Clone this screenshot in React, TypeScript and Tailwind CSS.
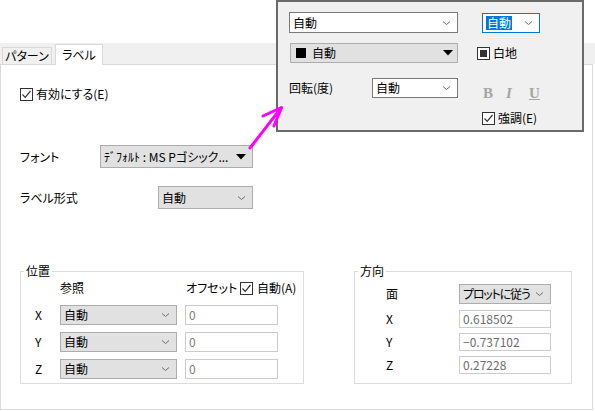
import type { ReactNode } from "react";

// small windows-style dropdown chevron
function Chevron() {
  return (
    <svg width="9" height="6" viewBox="0 0 9 6" className="shrink-0">
      <path d="M1 1.5 L4.5 4.5 L8 1.5" stroke="#6d6d6d" strokeWidth="1" fill="none" />
    </svg>
  );
}

function Triangle() {
  return (
    <svg width="10" height="6" viewBox="0 0 10 6" className="shrink-0">
      <polygon points="0,0 10,0 5,5.5" fill="#000" />
    </svg>
  );
}

function Check({ checked = true }: { checked?: boolean }) {
  return (
    <span className="flex h-[13px] w-[13px] shrink-0 items-center justify-center border border-[#333] bg-white">
      {checked ? (
        <svg width="11" height="11" viewBox="0 0 11 11">
          <path d="M1.5 5.5 L4.2 8.3 L9.5 2" stroke="#333" strokeWidth="1.2" fill="none" />
        </svg>
      ) : null}
    </span>
  );
}

function Select({
  className,
  children,
  arrow = "chevron",
}: {
  className: string;
  children: ReactNode;
  arrow?: "chevron" | "triangle";
}) {
  return (
    <div className={`flex items-center justify-between pl-[3px] pr-[6px] ${className}`}>
      <span className="whitespace-nowrap">{children}</span>
      {arrow === "chevron" ? <Chevron /> : <Triangle />}
    </div>
  );
}

function Field({ value, className }: { value: string; className: string }) {
  return (
    <div className={`flex items-center border border-[#cccccc] bg-white pl-[3px] text-[#6d6d6d] ${className}`}>
      {value}
    </div>
  );
}

function GroupBox({
  title,
  className,
  children,
}: {
  title: string;
  className: string;
  children: ReactNode;
}) {
  return (
    <div className={`relative border border-[#dcdcdc] ${className}`}>
      <span className="absolute -top-[10px] left-[3px] bg-white px-[2px] leading-[18px]">{title}</span>
      {children}
    </div>
  );
}

const grayBox = "bg-[#e1e1e1] border border-[#adadad]";

export default function App() {
  const rows = ["X", "Y", "Z"];
  const dir = [
    ["X", "0.618502"],
    ["Y", "\u22120.737102"],
    ["Z", "0.27228"],
  ];

  return (
    <div className="relative h-[411px] w-[595px] overflow-hidden bg-white text-[12px] leading-[16px] text-black font-['Noto_Sans_CJK_JP','Noto_Sans_CJK_SC',sans-serif] [font-feature-settings:'palt']">
      <div className="h-[43px]" />

      {/* tab strip */}
      <div className="flex h-[21px] items-end bg-[#f0f0f0]">
        <div className="ml-[2px] flex h-[17px] w-[50px] items-center justify-center border border-b-0 border-[#d9d9d9] bg-[#f0f0f0]">
          パターン
        </div>
        <div className="relative top-px z-10 ml-[3px] flex h-[21px] w-[48px] items-center justify-center border border-b-0 border-[#d9d9d9] bg-white">
          ラベル
        </div>
      </div>

      {/* page body */}
      <div className="h-[346px] w-[593px] border border-[#d9d9d9] pl-[19px]">
        <div className="mt-[21px] flex items-center gap-[3px]">
          <Check />
          <span>有効にする(E)</span>
        </div>

        <div className="mt-[43px] flex items-center">
          <span className="w-[80px]">フォント</span>
          <Select arrow="triangle" className={`h-[23px] w-[153px] ${grayBox}`}>
            ﾃﾞﾌｫﾙﾄ : MS Pゴシック...
          </Select>
        </div>

        <div className="mt-[18px] flex items-center">
          <span className="w-[138px]">ラベル形式</span>
          <Select className={`h-[23px] w-[95px] ${grayBox}`}>自動</Select>
        </div>

        <div className="mt-[62px] flex">
          <GroupBox title="位置" className="h-[113px] w-[284px] pl-[14px] pt-[8px]">
            <div className="flex h-[16px] items-center">
              <span className="w-[25px]" />
              <span className="w-[126px]">参照</span>
              <span className="w-[54px]">オフセット</span>
              <Check />
              <span className="ml-[4px]">自動(A)</span>
            </div>
            <div className="mt-[9px] flex flex-col gap-[7px]">
              {rows.map((r) => (
                <div key={r} className="flex h-[20px] items-center">
                  <span className="w-[25px]">{r}</span>
                  <Select className={`h-[20px] w-[117px] ${grayBox}`}>自動</Select>
                  <Field value="0" className="ml-[8px] h-[20px] w-[93px] text-[#808080]" />
                </div>
              ))}
            </div>
          </GroupBox>

          <GroupBox title="方向" className="ml-[50px] h-[113px] w-[218px] pl-[31px] pt-[12px]">
            <div className="flex h-[20px] items-center">
              <span className="w-[73px]">面</span>
              <Select className={`h-[20px] w-[92px] pr-[4px] tracking-[-1.2px] ${grayBox}`}>プロットに従う</Select>
            </div>
            <div className="mt-[6px] flex flex-col gap-[5px]">
              {dir.map(([k, v]) => (
                <div key={k} className="flex h-[18px] items-center">
                  <span className="w-[73px]">{k}</span>
                  <Field value={v} className="h-[18px] w-[92px]" />
                </div>
              ))}
            </div>
          </GroupBox>
        </div>
      </div>

      {/* floating label-format popup */}
      <div className="absolute left-[276px] top-0 h-[132px] w-[308px] border-2 border-[#6a6a6a] bg-[#f0f0f0] pl-[11px] pt-[10px]">
        <div className="flex items-center">
          <Select className="h-[21px] w-[169px] border border-[#7a7a7a] bg-white">自動</Select>
          <div className="ml-[24px] flex h-[20px] w-[58px] items-center justify-between border border-[#0078d7] bg-white pl-[3px] pr-[6px]">
            <span className="bg-[#0078d7] px-[1px] leading-[14px] text-white">自動</span>
            <Chevron />
          </div>
        </div>

        <div className="mt-[10px] flex items-center">
          <div className={`ml-[1px] flex h-[20px] w-[168px] items-center justify-between pl-[5px] pr-[4px] ${grayBox}`}>
            <span className="flex items-center">
              <span className="h-[10px] w-[10px] bg-black" />
              <span className="ml-[6px]">自動</span>
            </span>
            <Triangle />
          </div>
          <span className="ml-[19px] flex h-[13px] w-[13px] items-center justify-center border border-[#333] bg-white">
            <span className="h-[7px] w-[7px] bg-[#333]" />
          </span>
          <span className="ml-[3px]">白地</span>
        </div>

        <div className="mt-[15px] flex items-start">
          <div className="flex h-[20px] w-[169px] items-center justify-between">
            <span>回転(度)</span>
            <Select className="h-[20px] w-[86px] border border-[#7a7a7a] bg-white">自動</Select>
          </div>
          <div className="ml-[24px] flex flex-col">
            <div className="mt-[8px] flex h-[13px] items-center font-['Liberation_Serif',serif] text-[15px] font-bold text-[#a5a5a5]">
              <span className="w-[24px] pl-[1px]">B</span>
              <span className="w-[23px] italic">I</span>
              <span className="underline">U</span>
            </div>
            <div className="mt-[11px] flex items-center gap-[3px]">
              <Check />
              <span>強調(E)</span>
            </div>
          </div>
        </div>
      </div>

      {/* pointer arrow */}
      <svg className="pointer-events-none absolute left-[245px] top-[100px]" width="45" height="55" viewBox="0 0 45 55">
        <g stroke="#ff00ff" strokeWidth="3" fill="none" strokeLinecap="round" strokeLinejoin="round">
          <line x1="5" y1="48" x2="36" y2="8" />
          <polyline points="18,16 36.5,7.5 29,26" />
        </g>
      </svg>
    </div>
  );
}
